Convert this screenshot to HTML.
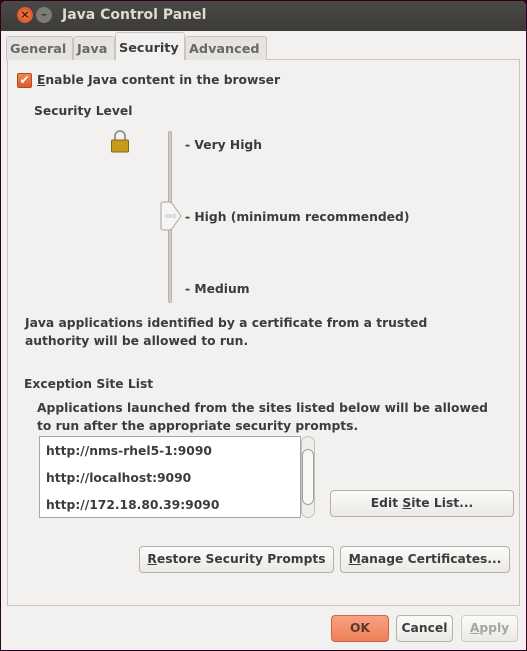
<!DOCTYPE html>
<html><head><style>
*{margin:0;padding:0;box-sizing:border-box}
body{width:527px;height:651px;background:#2c001e;font-family:"DejaVu Sans","Liberation Sans",sans-serif;font-size:12.3px;font-weight:bold;color:#3c3c3c;position:relative;overflow:hidden}
.win{position:absolute;left:1px;top:1px;width:525px;height:649px;background:#f2f1f0;border-radius:5px 5px 0 0;overflow:hidden}
.title{position:absolute;left:0;top:0;width:525px;height:30px;background:linear-gradient(#4a4945,#3c3b37);color:#dfdbd2;font-weight:bold;font-size:14px}
.a{position:absolute;white-space:nowrap}
.tab{position:absolute;top:35px;height:24px;border:1px solid #c9c6c1;border-bottom:none;background:#e6e4e1;border-radius:3px 3px 0 0;color:#6a6864;padding:5px 3px 0;font-size:12.8px}
.panel{position:absolute;left:6px;top:58px;width:513px;height:547px;border:1px solid #c9c6c1;background:#f2f1f0}
.btn{position:absolute;height:27px;border:1px solid #b4b0aa;border-radius:4px;background:linear-gradient(#fbfbfa,#ebe9e6);text-align:center;line-height:25px;color:#3c3c3c}
u{text-decoration:underline}
</style></head><body>
<div class="win">
<div class="title">
 <div class="a" style="left:16px;top:6px;width:16px;height:16px;border-radius:50%;background:radial-gradient(#f47a4a,#d9481a);color:#3a1a10;font-size:11px;text-align:center;line-height:16px">×</div>
 <div class="a" style="left:35px;top:6px;width:16px;height:16px;border-radius:50%;background:#7d7b76;color:#3c3b37;font-size:12px;text-align:center;line-height:15px">–</div>
 <div class="a" style="left:61px;top:6px">Java Control Panel</div>
</div>
<div class="panel"></div>
<div class="tab" style="left:5px;width:67px">General</div>
<div class="tab" style="left:72px;width:42px">Java</div>
<div class="tab" style="left:184px;width:82px">Advanced</div>
<div class="tab" style="left:114px;top:31px;height:28px;width:70px;background:#f2f1f0;color:#3c3c3c;padding-top:8px">Security</div>

<div class="a" style="left:16px;top:72px;width:15px;height:15px;border:1px solid #b5481c;border-radius:2px;background:linear-gradient(#f08a5d,#dd5a24);color:#fff;font-size:12px;line-height:13px;text-align:center">✔</div>
<div class="a" style="left:36px;top:72px"><u>E</u>nable Java content in the browser</div>
<div class="a" style="left:33px;top:103px">Security Level</div>
<svg class="a" style="left:109px;top:129px" width="20" height="23"><path d="M5 10V6a5 5 0 0 1 10 0v4" fill="none" stroke="#9a9a9a" stroke-width="2"/><rect x="1.5" y="10" width="17" height="12" rx="1" fill="#c99b1c" stroke="#8a6a10"/></svg>
<div class="a" style="left:167px;top:130px;width:4px;height:172px;background:#cfcdca;border:1px solid #b7b4b0;border-radius:2px"></div>
<svg class="a" style="left:159px;top:200px" width="24" height="31"><path d="M3 1h8l10 14l-10 14h-8a2 2 0 0 1-2-2V3a2 2 0 0 1 2-2z" fill="#f6f5f4" stroke="#a7a4a0"/><path d="M5 14h11M5 16h11" stroke="#c7c4c0"/></svg>
<div class="a" style="left:184px;top:137px">- Very High</div>
<div class="a" style="left:184px;top:209px">- High (minimum recommended)</div>
<div class="a" style="left:184px;top:281px">- Medium</div>
<div class="a" style="left:24px;top:313px;line-height:18px">Java applications identified by a certificate from a trusted<br>authority will be allowed to run.</div>
<div class="a" style="left:23px;top:376px">Exception Site List</div>
<div class="a" style="left:36px;top:398px;line-height:18px">Applications launched from the sites listed below will be allowed<br>to run after the appropriate security prompts.</div>
<div class="a" style="left:38px;top:435px;width:262px;height:82px;background:#fff;border:1px solid #a9a6a2"></div>
<div class="a" style="left:45px;top:437px;line-height:27px">http://nms-rhel5-1:9090<br>http://localhost:9090<br>http://172.18.80.39:9090</div>
<div class="a" style="left:300px;top:435px;width:14px;height:82px;border:1px solid #c4c1bd;border-radius:7px;background:#efeeec"></div>
<div class="a" style="left:301px;top:448px;width:12px;height:56px;border:1px solid #a5a29e;border-radius:6px;background:#f7f7f6"></div>
<div class="btn" style="left:329px;top:489px;width:184px"><span>Edit <u>S</u>ite List...</span></div>
<div class="btn" style="left:138px;top:545px;width:195px"><u>R</u>estore Security Prompts</div>
<div class="btn" style="left:339px;top:545px;width:170px"><u>M</u>anage Certificates...</div>
<div class="btn" style="left:330px;top:614px;width:58px;background:linear-gradient(#f8a183,#ef8057);border-color:#c76a48;color:#5a3a30">OK</div>
<div class="btn" style="left:395px;top:614px;width:57px">Cancel</div>
<div class="btn" style="left:460px;top:614px;width:57px;color:#a7a5a2;border-color:#cfccc8"><u>A</u>pply</div>
</div>
</body></html>
